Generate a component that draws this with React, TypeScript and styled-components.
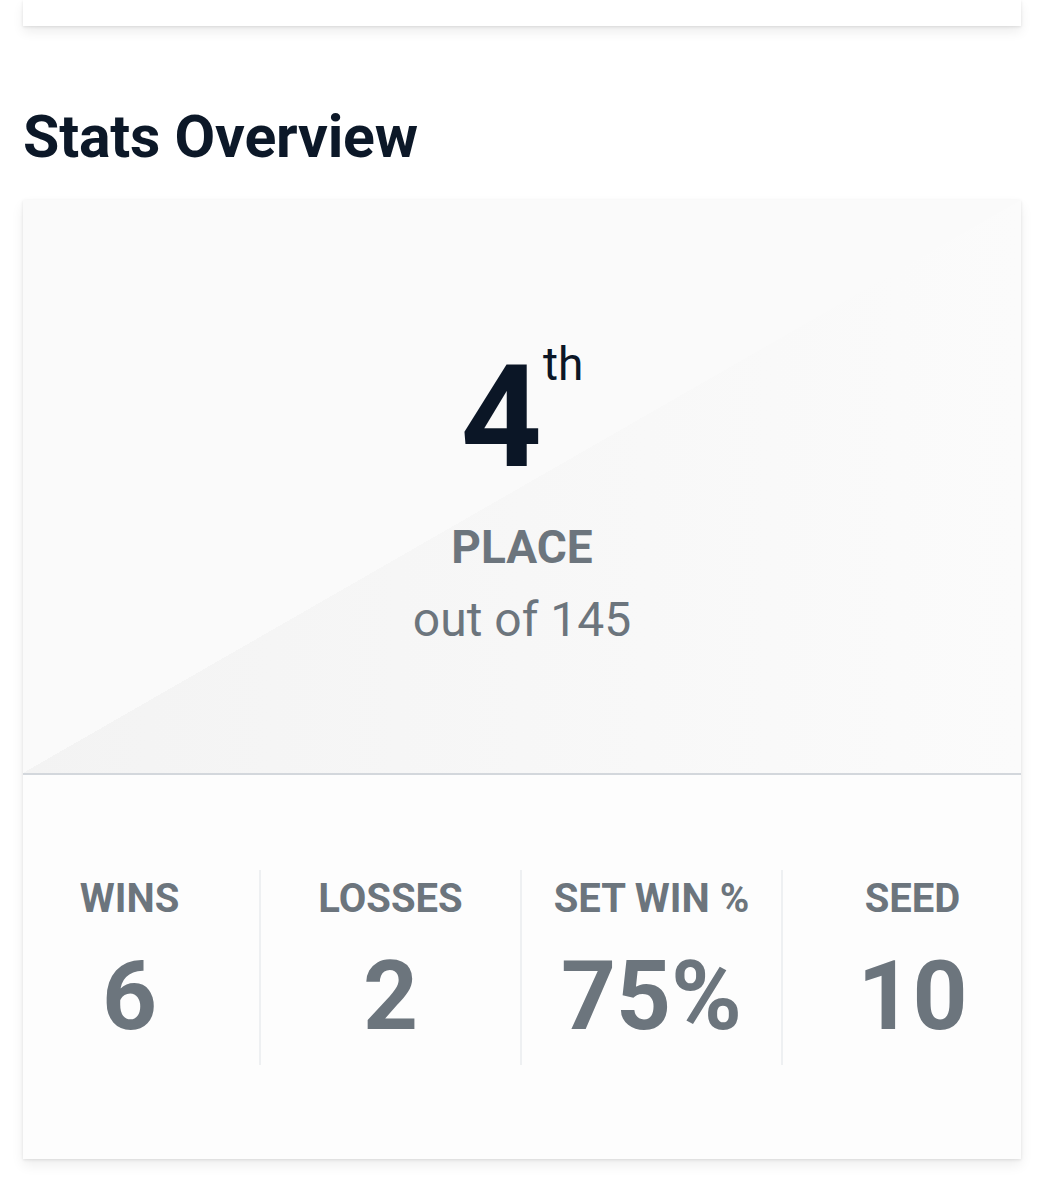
import React from 'react';
import styled, { createGlobalStyle } from 'styled-components';

const GlobalStyle = createGlobalStyle`
  html, body {
    margin: 0;
    padding: 0;
    background: #fff;
  }
  body {
    font-family: Roboto, "Noto Sans", "Liberation Sans", sans-serif;
  }
`;

type Stat = {
  label: string;
  value: string;
};

const stats: Stat[] = [
  { label: 'WINS', value: '6' },
  { label: 'LOSSES', value: '2' },
  { label: 'SET WIN %', value: '75%' },
  { label: 'SEED', value: '10' },
];

export default function App() {
  return (
    <>
      <GlobalStyle />
      <Page>
        <PrevCard />
        <SectionTitle>Stats Overview</SectionTitle>
        <Card>
          <RankPanel>
            <RankRow>
              <RankNumber>4</RankNumber>
              <RankSuffix>th</RankSuffix>
            </RankRow>
            <RankLabel>PLACE</RankLabel>
            <RankTotal>out of 145</RankTotal>
          </RankPanel>
          <StatsPanel>
            <StatsRow>
              {stats.map((s, i) => (
                <StatCol key={s.label} divider={i < stats.length - 1}>
                  <StatLabel>{s.label}</StatLabel>
                  <StatValue>{s.value}</StatValue>
                </StatCol>
              ))}
            </StatsRow>
          </StatsPanel>
        </Card>
      </Page>
    </>
  );
}

const Page = styled.div`
  padding: 0 23px 40px;
`;

const cardShadow = `
  box-shadow: 0 6px 12px rgba(0, 0, 0, 0.07), 0 1px 3px rgba(0, 0, 0, 0.1);
`;

const PrevCard = styled.div`
  height: 26px;
  background: #fff;
  ${cardShadow}
`;

const SectionTitle = styled.h2`
  margin: 76px 0 28px;
  font-size: 59px;
  line-height: 70px;
  font-weight: 700;
  color: #0c1828;
  letter-spacing: -0.2px;
`;

const Card = styled.div`
  background: #fdfdfd;
  overflow: hidden;
  ${cardShadow}
`;

const RankPanel = styled.div`
  height: 575px;
  box-sizing: border-box;
  padding-top: 147px;
  display: flex;
  flex-direction: column;
  align-items: center;
  background:
    linear-gradient(to bottom right, #fafafa 50%, rgba(250, 250, 250, 0) 50%),
    linear-gradient(to right, #f3f3f3, #fbfbfb);
  border-bottom: 2px solid #d3d7dc;
`;

const RankRow = styled.div`
  display: flex;
  align-items: flex-start;
`;

const RankNumber = styled.span`
  font-size: 142px;
  line-height: 142px;
  font-weight: 700;
  color: #0b1626;
`;

const RankSuffix = styled.span`
  font-size: 46px;
  line-height: 46px;
  font-weight: 400;
  color: #0b1626;
  margin: -6px 0 0 1px;
`;

const RankLabel = styled.div`
  margin-top: 35px;
  font-size: 46px;
  line-height: 46px;
  font-weight: 700;
  color: #6c757d;
`;

const RankTotal = styled.div`
  margin-top: 24px;
  font-size: 48px;
  line-height: 52px;
  font-weight: 400;
  color: #6c757d;
`;

const StatsPanel = styled.div`
  padding: 95px 0 94px;
`;

const StatsRow = styled.div`
  display: grid;
  grid-template-columns: repeat(4, 1fr);
  margin: 0 -23px;
`;

const StatCol = styled.div<{ divider: boolean }>`
  height: 195px;
  box-sizing: border-box;
  padding-top: 9px;
  display: flex;
  flex-direction: column;
  align-items: center;
  border-right: 2px solid ${p => (p.divider ? '#eef0f2' : 'transparent')};
`;

const StatLabel = styled.div`
  font-size: 40px;
  line-height: 40px;
  font-weight: 700;
  color: #6c757d;
`;

const StatValue = styled.div`
  margin-top: 29px;
  font-size: 96px;
  line-height: 96px;
  font-weight: 700;
  color: #6c757d;
`;
